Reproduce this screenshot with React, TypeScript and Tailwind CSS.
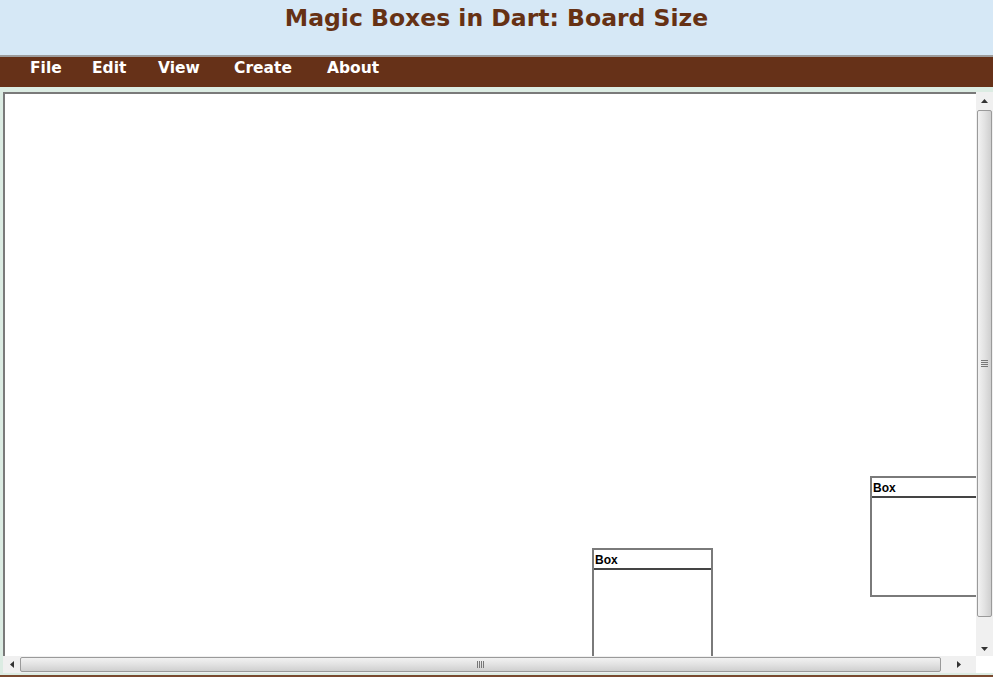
import React from 'react';

type BoxItem = {
  name: string;
  left: number;
  top: number;
};

const boxes: BoxItem[] = [
  { name: 'Box', left: 587, top: 454 },
  { name: 'Box', left: 865, top: 382 },
];

const menu = [
  { label: 'File', w: 'w-[62px]' },
  { label: 'Edit', w: 'w-[66px]' },
  { label: 'View', w: 'w-[76px]' },
  { label: 'Create', w: 'w-[93px]' },
  { label: 'About', w: 'w-[80px]' },
];

const ArrowUp = () => (
  <svg width="7" height="4" viewBox="0 0 7 4">
    <path d="M3.5 0 L7 4 L0 4 Z" fill="#333" />
  </svg>
);
const ArrowDown = () => (
  <svg width="7" height="4" viewBox="0 0 7 4">
    <path d="M0 0 L7 0 L3.5 4 Z" fill="#333" />
  </svg>
);
const ArrowLeft = () => (
  <svg width="4" height="7" viewBox="0 0 4 7">
    <path d="M4 0 L4 7 L0 3.5 Z" fill="#333" />
  </svg>
);
const ArrowRight = () => (
  <svg width="4" height="7" viewBox="0 0 4 7">
    <path d="M0 0 L4 3.5 L0 7 Z" fill="#333" />
  </svg>
);

const App: React.FC = () => {
  return (
    <div className="w-[993px] h-[677px] overflow-hidden bg-[#dcece3] font-['DejaVu_Sans',Verdana,sans-serif]">
      {/* header */}
      <div className="h-[57px] bg-[#d6e8f6] border-b-2 border-[#9c9c9c] flex justify-center">
        <h1 className="mt-[3px] text-[23.5px] font-bold text-[#663114] leading-[30px]">
          Magic Boxes in Dart: Board Size
        </h1>
      </div>

      {/* menu */}
      <div className="h-[30px] bg-[#663118] flex items-start pt-[1px] pl-[30px]">
        {menu.map((m) => (
          <span key={m.label} className={`${m.w} text-white font-bold text-[15.5px] leading-[20px]`}>
            {m.label}
          </span>
        ))}
      </div>

      {/* board */}
      <div className="mt-[5px] ml-[3px] w-[990px] bg-white">
        <div className="flex">
          <div className="relative w-[973px] h-[564px] border-t-2 border-l-2 border-[#7a7a7a] overflow-hidden bg-white">
            {boxes.map((b, i) => (
              <div
                key={i}
                className="absolute w-[121px] h-[121px] border-2 border-[#7a7a7a] bg-white"
                style={{ left: b.left, top: b.top }}
              >
                <div className="h-[20px] border-b-2 border-[#444] px-[1px] text-[12px] font-bold leading-[20px] text-black font-['Liberation_Sans',Arial,sans-serif]">
                  {b.name}
                </div>
              </div>
            ))}
          </div>
          {/* vertical scrollbar */}
          <div className="w-[17px] h-[564px] bg-[#f0f0f0] flex flex-col">
            <div className="h-[18px] flex items-center justify-center">
              <ArrowUp />
            </div>
            <div className="mx-[1px] h-[507px] rounded-[2px] border border-[#9a9a9a] bg-gradient-to-r from-[#f2f2f2] via-[#e2e2e2] to-[#cfcfcf] flex items-center justify-center">
              <div className="flex flex-col gap-[1px]">
                <div className="w-[7px] h-[1px] bg-[#777]" />
                <div className="w-[7px] h-[1px] bg-[#777]" />
                <div className="w-[7px] h-[1px] bg-[#777]" />
                <div className="w-[7px] h-[1px] bg-[#777]" />
              </div>
            </div>
            <div className="flex-1 flex items-end justify-center pb-[5px]">
              <ArrowDown />
            </div>
          </div>
        </div>
        {/* horizontal scrollbar */}
        <div className="flex h-[17px]">
          <div className="w-[973px] bg-[#f0f0f0] flex items-center">
            <div className="w-[17px] flex items-center justify-center">
              <ArrowLeft />
            </div>
            <div className="w-[921px] h-[15px] rounded-[2px] border border-[#9a9a9a] bg-gradient-to-b from-[#f2f2f2] via-[#e2e2e2] to-[#cfcfcf] flex items-center justify-center">
              <div className="flex gap-[1px]">
                <div className="w-[1px] h-[7px] bg-[#777]" />
                <div className="w-[1px] h-[7px] bg-[#777]" />
                <div className="w-[1px] h-[7px] bg-[#777]" />
                <div className="w-[1px] h-[7px] bg-[#777]" />
              </div>
            </div>
            <div className="flex-1 flex items-center justify-center">
              <ArrowRight />
            </div>
          </div>
          <div className="w-[17px] bg-white" />
        </div>
      </div>
      <div className="mt-[2px] h-[2px] bg-[#7a4a30]" />
    </div>
  );
};

export default App;
